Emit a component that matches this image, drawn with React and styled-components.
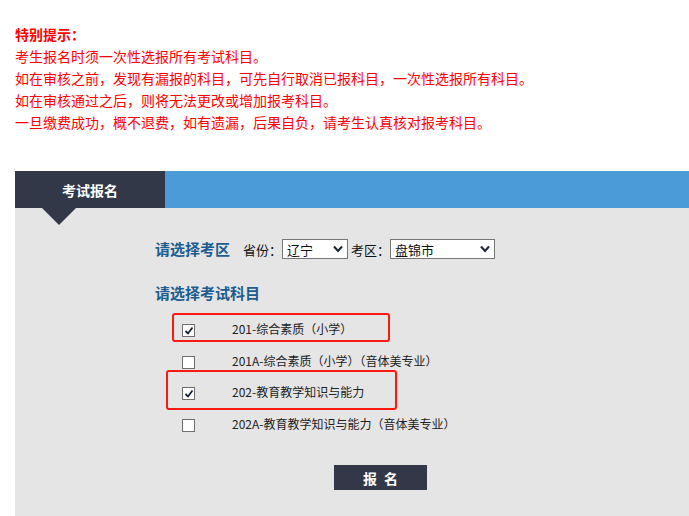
import React from 'react'
import styled, { createGlobalStyle } from 'styled-components'

const GlobalStyle = createGlobalStyle`
	html, body {
		margin: 0;
		padding: 0;
		background: #ffffff;
		font-family: "Liberation Sans", "Noto Sans CJK SC", sans-serif;
	}
`

const Page = styled.div`
	width: 689px;
	height: 516px;
	overflow: hidden;
	display: flex;
	flex-direction: column;
`

const Notice = styled.div`
	padding: 23px 15px 0;
	color: #ff0000;
	font: 400 14px/22px "Noto Sans CJK SC", sans-serif;
	height: 171px;
	flex-shrink: 0;
	box-sizing: border-box;

	& > p {
		margin: 0;
		white-space: nowrap;
	}
`

const NoticeTitle = styled.p`
	font-weight: 700;
`

const Panel = styled.div`
	flex: 1;
	margin-left: 15px;
	background: #e5e5e5;
`

const TabBar = styled.div`
	display: flex;
	height: 37px;
	background: #4b9bd9;
`

const Tab = styled.div`
	position: relative;
	width: 150px;
	background: #323847;
	color: #ffffff;
	display: flex;
	justify-content: center;
	align-items: center;
	font: 700 14px "Noto Sans CJK SC", sans-serif;

	&::after {
		content: '';
		position: absolute;
		left: 27px;
		top: 37px;
		border-left: 17.5px solid transparent;
		border-right: 17.5px solid transparent;
		border-top: 17px solid #323847;
	}
`

const Content = styled.div`
	padding: 31px 0 0 140px;
`

const RegionRow = styled.div`
	display: flex;
	align-items: center;
	height: 20px;
`

const SectionTitle = styled.div`
	color: #1d5d90;
	font: 700 15px/20px "Noto Sans CJK SC", sans-serif;
	margin-top: ${props => props.top || 0}px;
`

const FieldLabel = styled.span`
	color: #111;
	font: 400 13px "Noto Sans CJK SC", sans-serif;
	margin-left: ${props => props.gap}px;
`

const SelectBox = styled.div`
	position: relative;
	width: ${props => props.width}px;
	height: 20px;
	box-sizing: border-box;
	border: 1px solid #767676;
	background: #ffffff;
	display: flex;
	align-items: center;
	padding-left: 4px;
	color: #111;
	font: 400 13px "Noto Sans CJK SC", sans-serif;

	svg {
		position: absolute;
		right: 4px;
		top: 5px;
	}
`

const List = styled.div`
	margin-top: 10px;
`

const Row = styled.div`
	position: relative;
	display: flex;
	align-items: center;
	height: 31.5px;
	padding-left: 27px;
`

const Box = styled.span`
	width: 13px;
	height: 13px;
	box-sizing: border-box;
	border: 1px solid #6f6f6f;
	background: #ffffff;
	display: flex;
	align-items: center;
	justify-content: center;
	margin-top: 4px;
`

const ItemText = styled.span`
	margin-left: 37px;
	color: #222;
	font: 400 12px "Noto Sans CJK SC", sans-serif;
	white-space: nowrap;
`

const Highlight = styled.div`
	position: absolute;
	left: ${props => props.left}px;
	top: ${props => props.top}px;
	width: ${props => props.width}px;
	height: ${props => props.height}px;
	box-sizing: border-box;
	border: 2.5px solid #fa1a12;
	border-radius: 3px;
	pointer-events: none;
`

const SubmitButton = styled.button`
	margin: 26px 0 0 179px;
	width: 93px;
	height: 25px;
	border: none;
	background: #323847;
	color: #ffffff;
	font: 700 14px "Noto Sans CJK SC", sans-serif;
	letter-spacing: 2px;
	padding: 0 0 0 2px;
	cursor: pointer;
`

const Chevron = () => (
	<svg width="10" height="8" viewBox="0 0 10 8">
		<path d="M1 1.5 L5 6 L9 1.5" fill="none" stroke="#1b2230" strokeWidth="2" />
	</svg>
)

const Check = () => (
	<svg width="10" height="10" viewBox="0 0 10 10">
		<path d="M1.5 5 L4 7.5 L8.5 1.5" fill="none" stroke="#14203a" strokeWidth="1.8" />
	</svg>
)

const subjects = [
	{ label: '201-综合素质（小学）', checked: true, mark: { left: 17, top: 0, width: 218, height: 29 } },
	{ label: '201A-综合素质（小学）（音体美专业）' },
	{ label: '202-教育教学知识与能力', checked: true, mark: { left: 11, top: -6, width: 231, height: 40 } },
	{ label: '202A-教育教学知识与能力（音体美专业）' },
]

const notices = [
	'考生报名时须一次性选报所有考试科目。',
	'如在审核之前，发现有漏报的科目，可先自行取消已报科目，一次性选报所有科目。',
	'如在审核通过之后，则将无法更改或增加报考科目。',
	'一旦缴费成功，概不退费，如有遗漏，后果自负，请考生认真核对报考科目。',
]

export default function App() {
	return (
		<Page>
			<GlobalStyle />
			<Notice>
				<NoticeTitle>特别提示：</NoticeTitle>
				{notices.map(line => <p key={line}>{line}</p>)}
			</Notice>
			<Panel>
				<TabBar>
					<Tab>考试报名</Tab>
				</TabBar>
				<Content>
					<RegionRow>
						<SectionTitle>请选择考区</SectionTitle>
						<FieldLabel gap={13}>省份：</FieldLabel>
						<SelectBox width={66}>辽宁<Chevron /></SelectBox>
						<FieldLabel gap={3}>考区：</FieldLabel>
						<SelectBox width={105}>盘锦市<Chevron /></SelectBox>
					</RegionRow>
					<SectionTitle top={24}>请选择考试科目</SectionTitle>
					<List>
						{subjects.map(s => (
							<Row key={s.label}>
								<Box>{s.checked && <Check />}</Box>
								<ItemText>{s.label}</ItemText>
								{s.mark && <Highlight {...s.mark} />}
							</Row>
						))}
					</List>
					<SubmitButton>报 名</SubmitButton>
				</Content>
			</Panel>
		</Page>
	)
}
